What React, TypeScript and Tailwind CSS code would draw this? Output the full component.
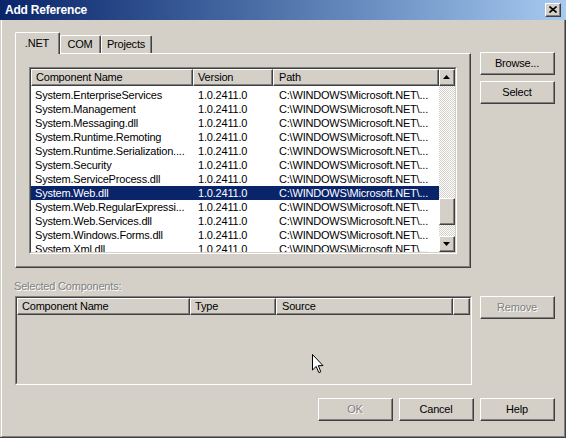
import React from "react";
import clsx from "clsx";

type RowData = { name: string; selected?: boolean };

const refs: RowData[] = [
  { name: "System.EnterpriseServices" },
  { name: "System.Management" },
  { name: "System.Messaging.dll" },
  { name: "System.Runtime.Remoting" },
  { name: "System.Runtime.Serialization...." },
  { name: "System.Security" },
  { name: "System.ServiceProcess.dll" },
  { name: "System.Web.dll", selected: true },
  { name: "System.Web.RegularExpressi..." },
  { name: "System.Web.Services.dll" },
  { name: "System.Windows.Forms.dll" },
  { name: "System.Xml.dll" },
];

// classic 3D raised bevel
function Raised({
  className,
  innerClassName,
  children,
}: {
  className?: string;
  innerClassName?: string;
  children?: React.ReactNode;
}) {
  return (
    <div
      className={clsx(
        "border-t border-l border-t-white border-l-white border-r border-b border-r-[#404040] border-b-[#404040] bg-[#d4d0c8]",
        className
      )}
    >
      <div
        className={clsx(
          "h-full w-full border-r border-b border-r-[#808080] border-b-[#808080] flex items-center",
          innerClassName ?? "justify-center"
        )}
      >
        {children}
      </div>
    </div>
  );
}

function Sunken({ className, innerClassName, children }: { className?: string; innerClassName?: string; children?: React.ReactNode }) {
  return (
    <div
      className={clsx(
        "border-t border-l border-t-[#808080] border-l-[#808080] border-r border-b border-r-white border-b-white",
        className
      )}
    >
      <div
        className={clsx(
          "h-full w-full border-t border-l border-t-[#404040] border-l-[#404040] border-r border-b border-r-[#d4d0c8] border-b-[#d4d0c8]",
          innerClassName
        )}
      >
        {children}
      </div>
    </div>
  );
}

function Button({ label, disabled }: { label: string; disabled?: boolean }) {
  return (
    <Raised className="w-[75px] h-[23px]">
      <span className={clsx(disabled && "text-[#808080] [text-shadow:1px_1px_0_#ffffff]")}>{label}</span>
    </Raised>
  );
}

function HeaderCell({ label, w, pad }: { label: string; w: string; pad: string }) {
  return (
    <Raised className={clsx("h-[17px] shrink-0", w)} innerClassName={clsx("justify-start", pad)}>
      <span className="whitespace-nowrap">{label}</span>
    </Raised>
  );
}

function Arrow({ up }: { up?: boolean }) {
  return (
    <svg width="7" height="4" viewBox="0 0 7 4">
      <polygon points={up ? "3.5,0 7,4 0,4" : "0,0 7,0 3.5,4"} fill="#000" />
    </svg>
  );
}

export default function App() {
  return (
    <div className="w-[566px] h-[438px] bg-[#d4d0c8] flex flex-col relative overflow-hidden font-['Liberation_Sans',Arial,sans-serif] text-[11px] leading-[13px] tracking-[-0.2px] text-black">
      {/* Title bar */}
      <div className="h-[20px] shrink-0 flex items-center justify-between pl-[5px] pr-[5px] bg-linear-to-r from-[#0a246a] to-[#a6caf0]">
        <span className="text-white font-bold text-[12px]">Add Reference</span>
        <Raised className="w-[16px] h-[14px]">
          <svg width="8" height="7" viewBox="0 0 8 7">
            <path d="M0.5 0.5 L7.5 6.5 M7.5 0.5 L0.5 6.5" stroke="#000" strokeWidth="1.6" />
          </svg>
        </Raised>
      </div>

      <div className="flex-1 border-r border-b border-[#404040]">
        <div className="h-full ml-px border-l border-l-white border-r border-b border-r-[#808080] border-b-[#808080] flex flex-col">
          {/* Tabs + list */}
          <div className="flex mt-[12px] ml-[13px]">
            <div className="w-[456px] flex flex-col">
              <div className="h-[21px] flex items-end">
                <div className="relative z-10 w-[45px] h-[22px] -mb-px bg-[#d4d0c8] border-t border-l border-t-white border-l-white border-r border-r-[#404040] rounded-tl-[2px] rounded-tr-[2px]">
                  <div className="h-full border-r border-r-[#808080] flex items-center justify-center">.NET</div>
                </div>
                <div className="w-[41px] h-[18px] border-t border-l border-t-white border-l-white border-r border-r-[#404040] rounded-tl-[2px] rounded-tr-[2px]">
                  <div className="h-full border-r border-r-[#808080] flex items-center justify-center">COM</div>
                </div>
                <div className="w-[51px] h-[18px] border-t border-l border-t-white border-l-white border-r border-r-[#404040] rounded-tl-[2px] rounded-tr-[2px]">
                  <div className="h-full border-r border-r-[#808080] flex items-center justify-center">Projects</div>
                </div>
              </div>

              {/* Tab panel */}
              <div className="h-[215px] border-t border-l border-t-white border-l-white border-r border-b border-r-[#404040] border-b-[#404040]">
                <div className="h-full border-r border-b border-r-[#808080] border-b-[#808080] pt-[13px] pl-[13px]">
                  <Sunken className="w-[428px] h-[187px]" innerClassName="bg-white flex">
                    <div className="w-[408px] flex flex-col overflow-hidden">
                      <div className="flex">
                        <HeaderCell label="Component Name" w="w-[162px]" pad="pl-[4px]" />
                        <HeaderCell label="Version" w="w-[80px]" pad="pl-[4px]" />
                        <HeaderCell label="Path" w="w-[166px]" pad="pl-[5px]" />
                      </div>
                      <div className="mt-[2px] flex flex-col">
                        {refs.map((r) => (
                          <div
                            key={r.name}
                            className={clsx(
                              "h-[14px] shrink-0 flex items-center leading-[14px] whitespace-nowrap",
                              r.selected ? "bg-[#0a246a] text-white" : "text-black"
                            )}
                          >
                            <div className="w-[162px] pl-[4px] overflow-hidden">{r.name}</div>
                            <div className="w-[80px] pl-[5px] overflow-hidden">1.0.2411.0</div>
                            <div className="w-[166px] pl-[6px] overflow-hidden">C:\WINDOWS\Microsoft.NET\...</div>
                          </div>
                        ))}
                      </div>
                    </div>
                    {/* Scrollbar */}
                    <div className="w-[16px] flex flex-col">
                      <Raised className="h-[17px] w-[16px] shrink-0">
                        <Arrow up />
                      </Raised>
                      <div className="flex-1 flex flex-col bg-[repeating-conic-gradient(#d4d0c8_0_25%,#ffffff_0_50%)] bg-[length:2px_2px]">
                        <div className="h-[112px]" />
                        <Raised className="h-[27px] w-[16px]" />
                      </div>
                      <Raised className="h-[16px] w-[16px] shrink-0">
                        <Arrow />
                      </Raised>
                    </div>
                  </Sunken>
                </div>
              </div>
            </div>

            <div className="ml-[9px] mt-[20px] flex flex-col gap-[6px]">
              <Button label="Browse..." />
              <Button label="Select" />
            </div>
          </div>

          {/* Selected components */}
          <div className="mt-[12px] ml-[12px] text-[#808080] [text-shadow:1px_1px_0_#ffffff]">Selected Components:</div>
          <div className="flex mt-[3px] ml-[13px]">
            <Sunken className="w-[457px] h-[89px]" innerClassName="bg-[#d4d0c8] flex flex-col">
              <div className="flex">
                <HeaderCell label="Component Name" w="w-[173px]" pad="pl-[4px]" />
                <HeaderCell label="Type" w="w-[86px]" pad="pl-[4px]" />
                <HeaderCell label="Source" w="w-[177px]" pad="pl-[5px]" />
                <HeaderCell label="" w="w-[17px]" pad="pl-0" />
              </div>
            </Sunken>
            <div className="ml-[8px]">
              <Button label="Remove" disabled />
            </div>
          </div>

          {/* Dialog buttons */}
          <div className="flex justify-end gap-[6px] mt-[13px] pr-[9px]">
            <Button label="OK" disabled />
            <Button label="Cancel" />
            <Button label="Help" />
          </div>
        </div>
      </div>

      {/* Mouse pointer */}
      <svg className="absolute left-[312px] top-[354px]" width="12" height="20" viewBox="0 0 12 20">
        <path d="M0.5 0.5 L0.5 16 L4.2 12.4 L6.8 18.6 L8.8 17.8 L6.3 11.6 L11 11.6 Z" fill="#fff" stroke="#000" strokeWidth="1" />
      </svg>
    </div>
  );
}
